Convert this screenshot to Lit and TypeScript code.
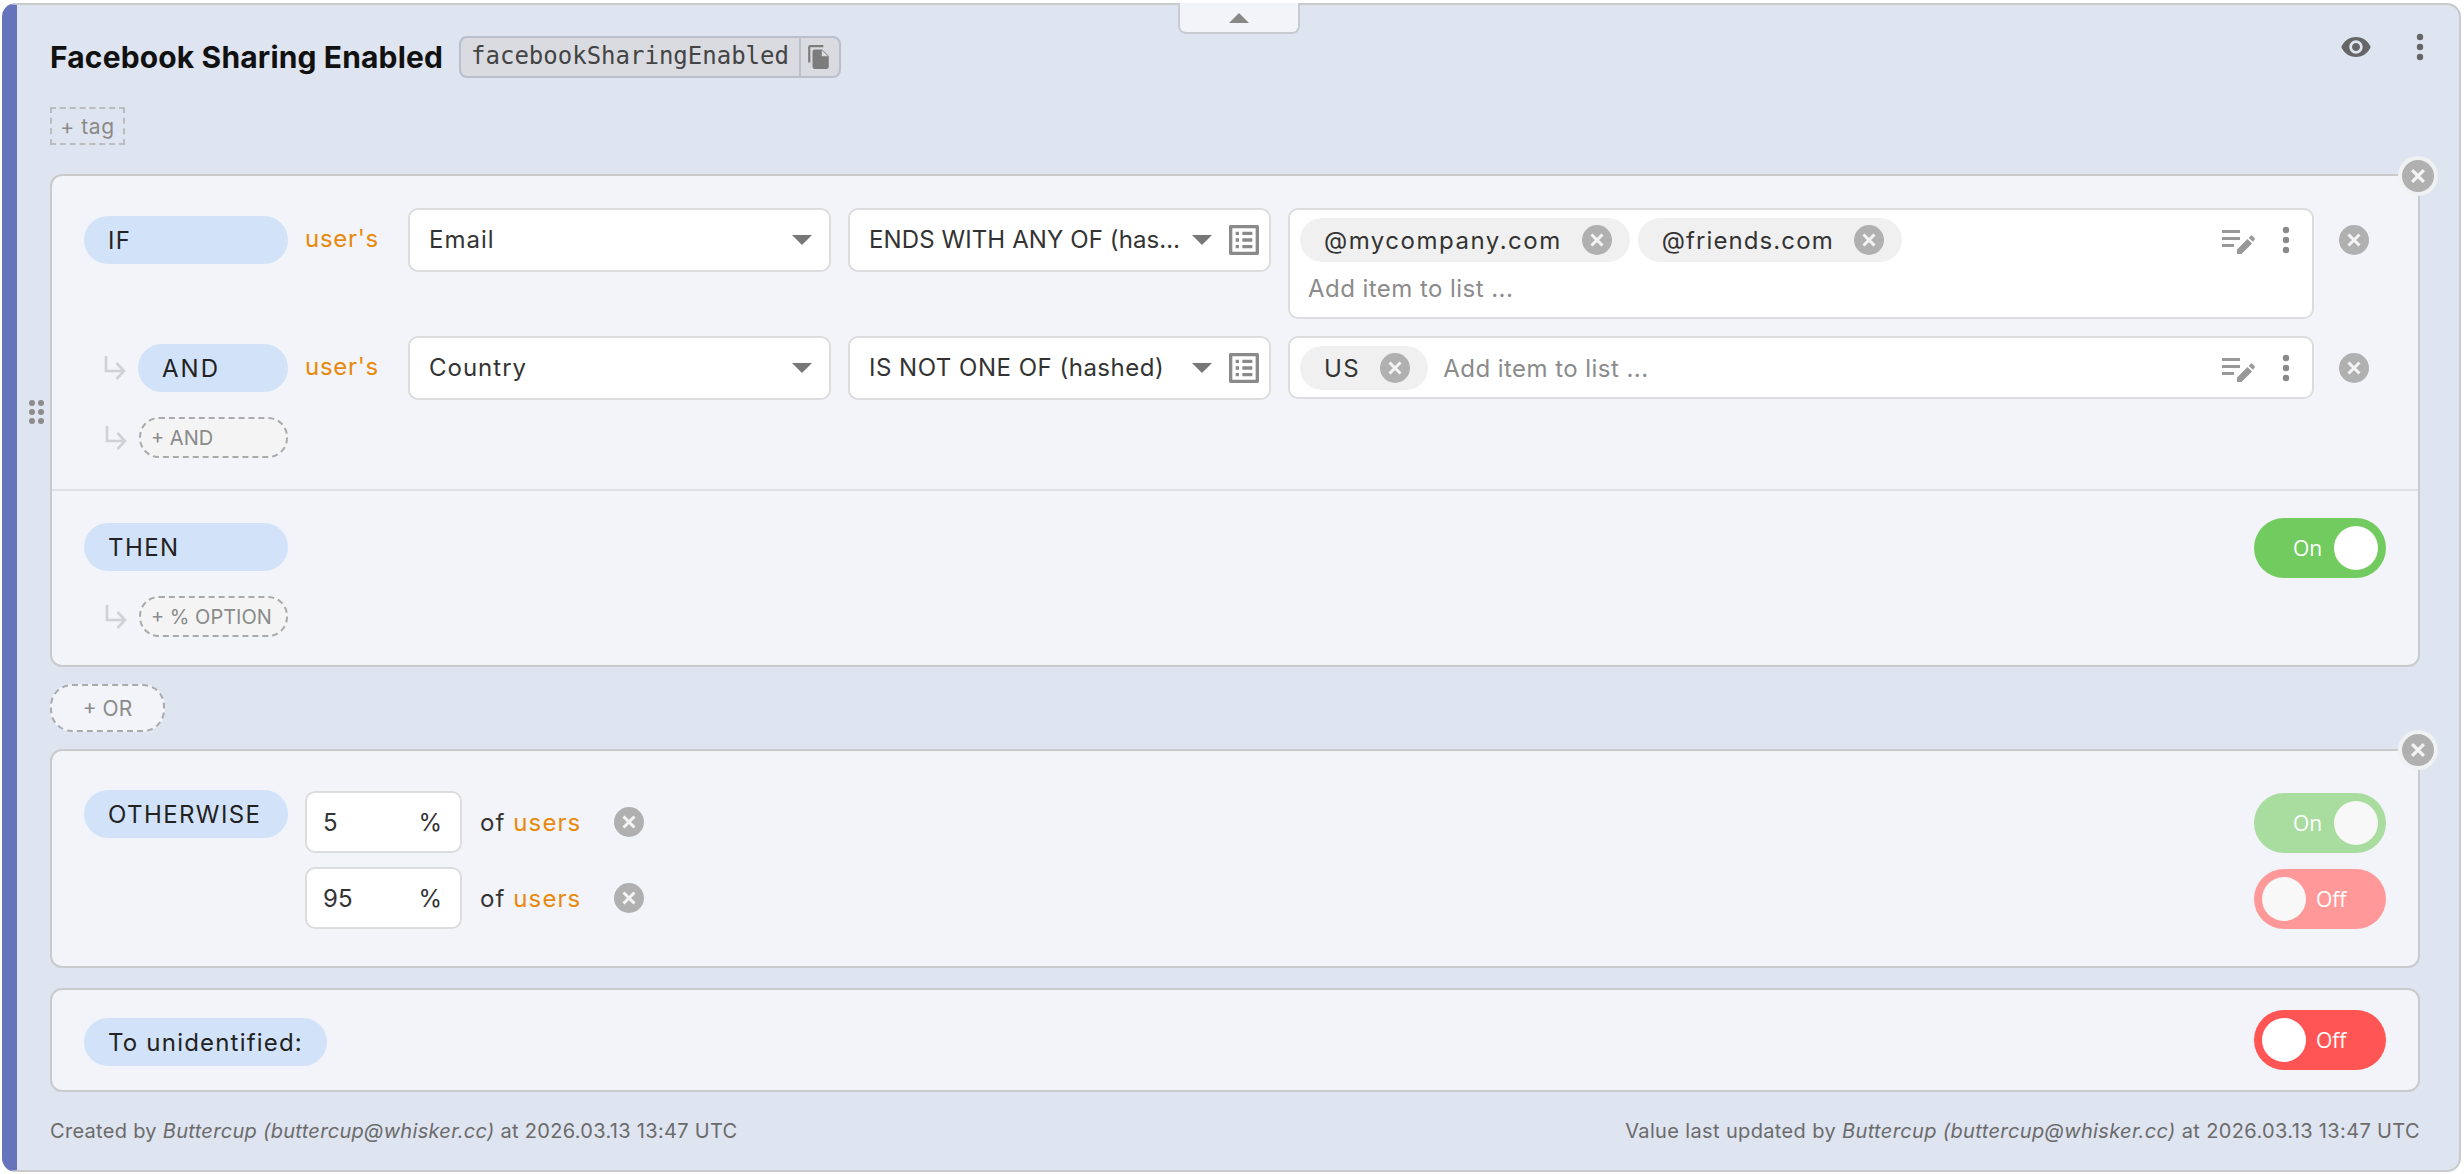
import { LitElement, html, css } from "lit";
import { customElement } from "lit/decorators.js";

const xIcon = (cls = "x") => html`<svg class=${cls} viewBox="0 0 30 30"><circle cx="15" cy="15" r="15" fill="#b0b0b0"/><path d="M9.5 9.5l11 11M20.5 9.5l-11 11" stroke="#f4f4f4" stroke-width="3" fill="none"/></svg>`;
const kebab = (fill: string) => html`<svg class="kebab" viewBox="0 0 12 32"><circle cx="6" cy="6" r="3.2" fill=${fill}/><circle cx="6" cy="16" r="3.2" fill=${fill}/><circle cx="6" cy="26" r="3.2" fill=${fill}/></svg>`;
const arrow = html`<svg class="arrow" viewBox="0 0 22 26"><path d="M2 1v15h17M12.5 8l7.5 8-7.5 8" fill="none" stroke="#cfd1d4" stroke-width="2.6"/></svg>`;
const caret = html`<svg class="caret" viewBox="0 0 20 10"><path d="M0 0h20L10 10z" fill="#777"/></svg>`;
const listIcon = html`<svg class="list" viewBox="3 3 18 18"><path fill="#8a8a8a" d="M19 5v14H5V5h14m1.1-2H3.9c-.5 0-.9.4-.9.9v16.2c0 .4.4.9.9.9h16.2c.4 0 .9-.5.9-.9V3.9c0-.5-.5-.9-.9-.9zM11 7h6v2h-6V7zm0 4h6v2h-6v-2zm0 4h6v2h-6zM7 7h2v2H7zm0 4h2v2H7zm0 4h2v2H7z"/></svg>`;
const editIcon = html`<svg class="edit" viewBox="0 0 34 26"><path fill="#999" d="M1 1h18v3H1zM1 8h18v3H1zM1 15h12v3H1z"/><path fill="#999" d="M16 25v-4.5L26.5 10l4.5 4.5L20.5 25zM27.8 8.7l1.7-1.7c.6-.6 1.4-.6 2 0l2 2c.5.5.5 1.4 0 2l-1.7 1.7z"/></svg>`;
const copyIcon = html`<svg class="copy" viewBox="0 0 24 24"><path fill="#7c7c7c" d="M16 1H4c-1.1 0-2 .9-2 2v14h2V3h12V1zm-1 4l6 6v10c0 1.1-.9 2-2 2H7.99C6.89 23 6 22.1 6 21l.01-14c0-1.1.89-2 1.99-2h7z"/><path fill="#dadce1" d="M14.6 5.6l5.7 5.7h-5.7z"/></svg>`;
const eye = html`<svg class="eye" viewBox="0 0 24 24"><path fill="#666" d="M12 4.5C7 4.5 2.73 7.61 1 12c1.73 4.39 6 7.5 11 7.5s9.27-3.11 11-7.5c-1.73-4.39-6-7.5-11-7.5zM12 17c-2.76 0-5-2.24-5-5s2.24-5 5-5 5 2.24 5 5-2.24 5-5 5zm0-8c-1.66 0-3 1.34-3 3s1.34 3 3 3 3-1.34 3-3-1.34-3-3-3z"/></svg>`;

const toggle = (on: boolean, faded = false) => html`<div class="toggle ${on ? "on" : "off"} ${faded ? "faded" : ""}"><span class="t-label">${on ? "On" : "Off"}</span><span class="knob"></span></div>`;
const chip = (t: string, cls = "") => html`<div class="chip ${cls}"><span>${t}</span>${xIcon()}</div>`;

@customElement("app-root")
export class AppRoot extends LitElement {
  static styles = css`
    :host { display: block; width: 2464px; height: 1174px; background: #fff; font-family: Inter, sans-serif; color: #222; overflow: hidden; }
    * { box-sizing: border-box; }
    svg { display: block; flex: none; }
    .flag { position: relative; margin: 3px 0 0 2px; width: 2459px; height: 1169px; background: #dee4f0; border: 2px solid #c9cacc; border-left: 15px solid #6674bb; border-radius: 14px; padding: 31px 39px 0 33px; }
    .tab { position: absolute; top: -2px; left: 1161px; width: 122px; height: 31px; background: #f2f4f9; border: 2px solid #c8cbd2; border-top: 0; border-radius: 0 0 8px 8px; display: flex; align-items: center; justify-content: center; }
    .tab i { width: 0; height: 0; border-left: 10px solid transparent; border-right: 10px solid transparent; border-bottom: 10px solid #888; }
    .grip { position: absolute; left: 12px; top: 395px; display: grid; grid-template-columns: 6px 6px; gap: 3px; }
    .grip i { width: 6px; height: 6px; border-radius: 50%; background: #8c8c8c; }
    .header { display: flex; align-items: center; height: 42px; gap: 16px; margin-right: -6px; }
    .title { font-weight: 700; font-size: 30px; color: #111; letter-spacing: 0.15px; white-space: nowrap; }
    .code { display: flex; height: 42px; background: #d9dbe1; border: 2px solid #b9bfcc; border-radius: 8px; align-items: center; }
    .code span { font-family: "DejaVu Sans Mono", monospace; font-size: 24px; color: #444; padding: 0 10px; border-right: 2px solid #b9bfcc; height: 38px; line-height: 36px; }
    .copy { width: 26px; height: 26px; margin: 0 7px 0 5px; }
    .actions { margin-left: auto; align-self: flex-start; margin-top: -5px; display: flex; align-items: center; gap: 42px; }
    .eye { width: 32px; height: 32px; }
    .kebab { width: 12px; height: 32px; }
    .tag { margin-top: 29px; width: 75px; height: 38px; border: 2px dashed #bbbcc0; font-size: 21px; letter-spacing: 0.6px; color: #8a8a8a; display: flex; align-items: center; justify-content: center; }
    .card { position: relative; background: #f2f4f9; border: 2px solid #c9cacc; border-radius: 12px; }
    .c1 { margin-top: 29px; }
    .close { position: absolute; top: -20px; right: -20px; width: 40px; height: 40px; border-radius: 50%; background: #f0f1f3; padding: 4px; }
    .close .x { width: 32px; height: 32px; }
    .x { width: 30px; height: 30px; }
    .cond { padding: 32px 32px 31px; display: flex; flex-direction: column; gap: 17px; }
    .row { display: flex; align-items: flex-start; }
    .lead { width: 204px; display: flex; justify-content: flex-end; align-items: center; flex: none; }
    .arrow { width: 22px; height: 26px; margin-right: 12px; }
    .pill { height: 48px; border-radius: 24px; background: #d2e3f9; font-size: 24px; letter-spacing: 1.4px; color: #222; display: flex; align-items: center; padding: 0 24px; flex: none; white-space: nowrap; }
    .w204 { width: 204px; }
    .w243 { width: 243px; letter-spacing: 1.2px; }
    .w150 { width: 150px; padding-left: 24px; letter-spacing: 2px; }
    .lead .pill { margin-top: 8px; }
    .lead .arrow { margin-top: 8px; }
    .users { font-size: 24px; letter-spacing: 0.7px; color: #e8890c; width: 103px; margin-left: 17px; flex: none; height: 64px; display: flex; align-items: center; }
    .users span { position: relative; top: -2px; }
    .select { width: 423px; height: 64px; flex: none; background: #fff; border: 2px solid #dcdcdc; border-radius: 10px; display: flex; align-items: center; padding: 0 17px 0 19px; font-size: 24px; letter-spacing: 1px; color: #333; }
    .select .txt { flex: 1; min-width: 0; white-space: nowrap; position: relative; top: -1px; }
    .select.op { margin-left: 17px; padding-right: 10px; letter-spacing: 0.5px; }
    .select.op .tight { letter-spacing: 0.1px; }
    .caret { width: 20px; height: 10px; margin-left: 8px; }
    .list { width: 30px; height: 30px; margin-left: 17px; }
    .value { width: 1026px; margin-left: 17px; flex: none; background: #fff; border: 2px solid #dcdcdc; border-radius: 10px; display: flex; align-items: flex-start; padding: 8px 0 0 10px; }
    .value.tall { height: 111px; }
    .value.short { height: 63px; }
    .items { flex: 1; display: flex; flex-wrap: wrap; gap: 0 8px; align-items: center; }
    .chip { height: 44px; border-radius: 22px; background: #f0f0f0; display: flex; align-items: center; padding: 0 18px 0 24px; gap: 20px; font-size: 24px; letter-spacing: 1.5px; color: #333; }
    .chip.snug { letter-spacing: 1.1px; }
    .ph { font-size: 24px; letter-spacing: 0.45px; color: #8b8b8b; height: 44px; display: flex; align-items: center; }
    .ph.full { width: 100%; padding-left: 8px; margin-top: 4px; }
    .ph.inline { margin-left: 7px; }
    .tools { display: flex; align-items: center; height: 44px; width: 91px; flex: none; }
    .edit { width: 34px; height: 26px; margin: 3px 25px 0 0; }
    .x.rowx { margin: 17px 0 0 25px; }
    .then { border-top: 2px solid #dde0e5; padding: 32px 32px 28px; display: flex; justify-content: space-between; align-items: flex-start; }
    .then .toggle { margin-top: -5px; }
    .col { display: flex; flex-direction: column; gap: 25px; }
    .lead2 { display: flex; align-items: center; width: 204px; justify-content: flex-end; }
    .lead2 .arrow { margin-right: 12px; }
    .add { height: 41px; width: 149px; border: 2px dashed #aaa; border-radius: 20px; background: #f4f4f5; display: flex; align-items: center; font-size: 20px; color: #8a8a8a; padding-left: 10px; white-space: nowrap; }
    .or { margin: 17px 0; width: 115px; height: 48px; border: 2px dashed #aaa; border-radius: 22px; background: #f2f4f9; display: flex; align-items: center; justify-content: center; font-size: 21px; color: #8a8a8a; }
    .other { height: 219px; padding: 39px 32px 0; display: flex; align-items: flex-start; }
    .other .close { top: -21px; }
    .opts { flex: 1; margin: 1px 0 0 17px; display: flex; flex-direction: column; gap: 14px; }
    .opt { display: flex; align-items: center; height: 62px; }
    .input { width: 157px; height: 62px; background: #fff; border: 2px solid #dcdcdc; border-radius: 10px; display: flex; justify-content: space-between; align-items: center; padding: 0 18px 0 16px; font-size: 24px; color: #333; }
    .of { font-size: 24px; letter-spacing: 1.1px; margin-left: 18px; width: 134px; color: #333; }
    .of b { font-weight: 400; color: #e8890c; }
    .opt .toggle { margin-left: auto; margin-top: 1px; }
    .last { margin-top: 20px; height: 104px; padding: 28px 32px 0; display: flex; justify-content: space-between; align-items: flex-start; }
    .last .toggle { margin-top: -8px; }
    .foot { margin-top: 26px; display: flex; justify-content: space-between; font-size: 20px; letter-spacing: 0.3px; color: #6b6b6b; line-height: 26px; white-space: nowrap; }
    .foot .updated { letter-spacing: 0.36px; }
    .foot em { font-style: italic; }
    .toggle { position: relative; flex: none; width: 132px; height: 60px; border-radius: 30px; font-family: "Open Sans", sans-serif; font-size: 21px; color: #fff; display: flex; align-items: center; }
    .toggle.on { background: #71cb5f; justify-content: flex-start; padding-left: 39px; }
    .toggle.off { background: #ff5555; padding-left: 62px; }
    .toggle.on.faded { background: #a9dc9f; }
    .toggle.off.faded { background: #ff9999; }
    .toggle.faded .knob { background: #f8f8f8; }
    .knob { position: absolute; top: 8px; width: 44px; height: 44px; border-radius: 50%; background: #fff; }
    .on .knob { right: 8px; }
    .off .knob { left: 8px; }
  `;

  render() {
    return html`
      <div class="flag">
        <div class="tab"><i></i></div>
        <div class="grip">${[1, 2, 3, 4, 5, 6].map(() => html`<i></i>`)}</div>
        <div class="header">
          <div class="title">Facebook Sharing Enabled</div>
          <div class="code"><span>facebookSharingEnabled</span>${copyIcon}</div>
          <div class="actions">${eye}${kebab("#666")}</div>
        </div>
        <div class="tag">+ tag</div>

        <div class="card c1">
          <div class="close">${xIcon()}</div>
          <div class="cond">
            <div class="row">
              <div class="lead"><div class="pill w204">IF</div></div>
              <div class="users"><span>user's</span></div>
              <div class="select"><span class="txt">Email</span>${caret}</div>
              <div class="select op"><span class="txt tight">ENDS WITH ANY OF (has…</span>${caret}${listIcon}</div>
              <div class="value tall">
                <div class="items">
                  ${chip("@mycompany.com")}${chip("@friends.com", "snug")}
                  <div class="ph full">Add item to list ...</div>
                </div>
                <div class="tools">${editIcon}${kebab("#8a8a8a")}</div>
              </div>
              ${xIcon("x rowx")}
            </div>
            <div class="row">
              <div class="lead">${arrow}<div class="pill w150">AND</div></div>
              <div class="users"><span>user's</span></div>
              <div class="select"><span class="txt">Country</span>${caret}</div>
              <div class="select op"><span class="txt">IS NOT ONE OF (hashed)</span>${caret}${listIcon}</div>
              <div class="value short">
                <div class="items">
                  ${chip("US")}
                  <div class="ph inline">Add item to list ...</div>
                </div>
                <div class="tools">${editIcon}${kebab("#8a8a8a")}</div>
              </div>
              ${xIcon("x rowx")}
            </div>
            <div class="lead2">${arrow}<div class="add">+ AND</div></div>
          </div>
          <div class="then">
            <div class="col">
              <div class="pill w204">THEN</div>
              <div class="lead2">${arrow}<div class="add">+ % OPTION</div></div>
            </div>
            ${toggle(true)}
          </div>
        </div>

        <div class="or">+ OR</div>

        <div class="card other">
          <div class="close">${xIcon()}</div>
          <div class="pill w204">OTHERWISE</div>
          <div class="opts">
            <div class="opt">
              <div class="input"><span>5</span><span>%</span></div>
              <div class="of">of <b>users</b></div>
              ${xIcon()}
              ${toggle(true, true)}
            </div>
            <div class="opt">
              <div class="input"><span>95</span><span>%</span></div>
              <div class="of">of <b>users</b></div>
              ${xIcon()}
              ${toggle(false, true)}
            </div>
          </div>
        </div>

        <div class="card last">
          <div class="pill w243">To unidentified:</div>
          ${toggle(false)}
        </div>

        <div class="foot">
          <div>Created by <em>Buttercup (buttercup@whisker.cc)</em> at 2026.03.13 13:47 UTC</div>
          <div class="updated">Value last updated by <em>Buttercup (buttercup@whisker.cc)</em> at 2026.03.13 13:47 UTC</div>
        </div>
      </div>
    `;
  }
}
